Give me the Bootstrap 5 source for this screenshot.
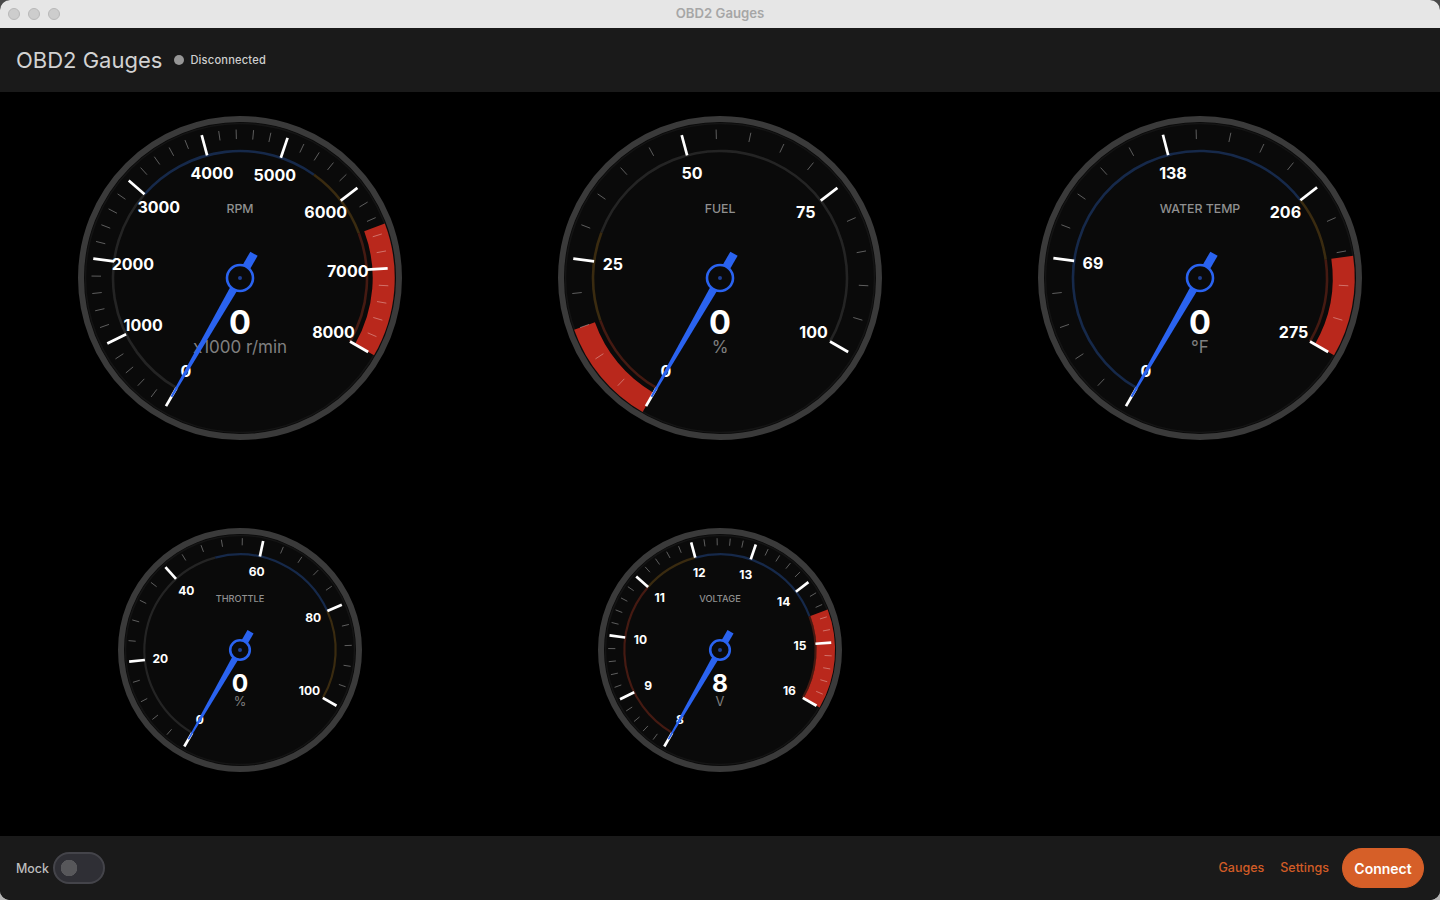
<!DOCTYPE html>
<html lang="en">
  <head>
    <meta charset="UTF-8" />
    <meta name="viewport" content="width=device-width, initial-scale=1.0" />
    <link rel="stylesheet" href="https://cdn.jsdelivr.net/npm/bootstrap@5.3.3/dist/css/bootstrap.min.css" />
    <title>OBD2 Gauges</title>
    <style>
      html, body { height: 100%; }
      body {
        background: linear-gradient(#4a4a4a 0 50%, #b5b5b5 50%);
        font-family: Inter, "Liberation Sans", sans-serif;
        overflow: hidden;
      }
      .app-window { height: 900px; border-radius: 10px; overflow: hidden; background: #000; }
      .title-bar { height: 28px; background: #e6e6e6; position: relative; }
      .light { width: 12px; height: 12px; border-radius: 50%; background: #cdcdcd; border: 1px solid #b8b8b8; }
      .title-text { font-size: 13.2px; font-weight: 600; color: #a6a6a6; line-height: 27px; }
      .traffic { gap: 8px; padding-left: 8px; }
      .app-header { height: 64px; background: #1a1a1a; padding: 0 16px; gap: 12px; }
      .app-title { font-size: 22px; font-weight: 400; color: #d2d2d2; margin: 0; line-height: 1; }
      .status-group { gap: 6px; }
      .status-dot { width: 10px; height: 10px; border-radius: 50%; background: #969696; }
      .status-text { font-size: 11.1px; font-weight: 500; color: #cfcfcf; letter-spacing: .2px; margin-top: 1px; }
      .gauge-area { height: 744px; display: grid; grid-template-columns: repeat(3, 480px); grid-template-rows: repeat(2, 372px); }
      .gauge-cell { display: flex; align-items: center; justify-content: center; }
      .gauge-cell svg { display: block; }
      .gauge-cell text { font-family: Inter, "Liberation Sans", sans-serif; text-anchor: middle; dominant-baseline: central; }
      .app-footer { height: 64px; background: #1a1a1a; padding: 0 16px; }
      .switch-group { gap: 4px; }
      .mock-label { font-size: 12.4px; font-weight: 500; color: #bdbdbd; margin-top: 2px; }
      .form-switch .mock-switch {
        width: 52px; height: 32px; margin: 0; float: none;
        background-color: #2f2f35; border: 2px solid #44444a;
        background-image: radial-gradient(circle at 14px 14px, #57575a 8px, transparent 8.5px);
        background-position: 0 0; background-size: auto;
      }
      .form-switch .mock-switch:focus { box-shadow: none; border-color: #44444a; }
      .foot-link { font-size: 12.5px; font-weight: 500; color: #d25c26; text-decoration: none; margin-top: 1px; }
      .btn-connect {
        --bs-btn-bg: #d65f28; --bs-btn-hover-bg: #d65f28; --bs-btn-color: #fff; --bs-btn-hover-color: #fff;
        --bs-btn-border-color: #d65f28; --bs-btn-hover-border-color: #d65f28;
        width: 82px; height: 40px; padding: 0; font-size: 14px; font-weight: 600; margin-left: -3px;
      }
    </style>
  </head>

  <body>
    <div class="app-window d-flex flex-column">
      <div class="title-bar d-flex align-items-center">
        <div class="traffic d-flex"><span class="light"></span><span class="light"></span><span class="light"></span></div>
        <div class="title-text position-absolute top-0 start-0 w-100 text-center">OBD2 Gauges</div>
      </div>

      <header class="app-header d-flex align-items-center">
        <h1 class="app-title">OBD2 Gauges</h1>
        <div class="status-group d-flex align-items-center">
          <span class="status-dot"></span>
          <span class="status-text">Disconnected</span>
        </div>
      </header>

      <main class="gauge-area" id="gauges"></main>

      <footer class="app-footer d-flex align-items-center justify-content-between">
        <div class="form-check form-switch switch-group d-flex align-items-center p-0 m-0">
          <label class="mock-label" for="mock">Mock</label>
          <input class="form-check-input mock-switch" type="checkbox" role="switch" id="mock" />
        </div>
        <nav class="d-flex align-items-center gap-3">
          <a class="foot-link" href="#">Gauges</a>
          <a class="foot-link" href="#">Settings</a>
          <button class="btn btn-connect rounded-pill">Connect</button>
        </nav>
      </footer>
    </div>

    <script>
      const START = 120;
      const SWEEP = 270;
      const BLUE = "#16294a";
      const AMBER = "#3a2b10";
      const DARKRED = "#451a12";
      const GREY = "#242424";
      const NEEDLE = "#2a63f0";

      const gauges = [
        { title: "RPM", unit: "x1000 r/min", value: "0", min: 0, max: 8000, labels: [0, 1000, 2000, 3000, 4000, 5000, 6000, 7000, 8000], subs: 40,
          arcs: [[0, 3000, GREY], [3000, 5500, BLUE], [5500, 6500, AMBER], [6500, 8000, DARKRED]], red: [6500, 8000] },
        { title: "FUEL", unit: "%", value: "0", min: 0, max: 100, labels: [0, 25, 50, 75, 100], subs: 20,
          arcs: [[0, 15, DARKRED], [15, 30, AMBER], [30, 100, GREY]], red: [0, 15] },
        { title: "WATER TEMP", unit: "°F", value: "0", min: 0, max: 275, labels: [0, 69, 138, 206, 275], subs: 20,
          arcs: [[0, 206, BLUE], [206, 236, AMBER], [236, 275, DARKRED]], red: [236, 275] },
        { title: "THROTTLE", unit: "%", value: "0", min: 0, max: 100, labels: [0, 20, 40, 60, 80, 100], subs: 25, small: true,
          arcs: [[0, 50, GREY], [50, 80, BLUE], [80, 100, AMBER]] },
        { title: "VOLTAGE", unit: "V", value: "8", min: 8, max: 16, labels: [8, 9, 10, 11, 12, 13, 14, 15, 16], subs: 40, small: true,
          arcs: [[8, 11, DARKRED], [11, 12, AMBER], [12, 14.5, BLUE], [14.5, 16, DARKRED]], red: [14.5, 16] },
      ];

      function pt(r, deg) {
        const a = (deg * Math.PI) / 180;
        return [+(r * Math.cos(a)).toFixed(2), +(r * Math.sin(a)).toFixed(2)];
      }

      function arc(r, a, b, color, width) {
        const large = b - a > 180 ? 1 : 0;
        const [x1, y1] = pt(r, a);
        const [x2, y2] = pt(r, b);
        return `<path d="M${x1} ${y1} A${r} ${r} 0 ${large} 1 ${x2} ${y2}" fill="none" stroke="${color}" stroke-width="${width}"/>`;
      }

      function tick(r1, r2, deg, attrs) {
        const [x1, y1] = pt(r1, deg);
        const [x2, y2] = pt(r2, deg);
        return `<line x1="${x1}" y1="${y1}" x2="${x2}" y2="${y2}" stroke="#fff" ${attrs}/>`;
      }

      function gaugeSvg(g) {
        const toDeg = (v) => START + ((v - g.min) / (g.max - g.min)) * SWEEP;
        const size = g.small ? 244 : 324;
        // strokes keep their pixel width on the small gauges
        const k = 324 / size;
        const ring = 6 * k;
        let s = `<svg width="${size}" height="${size}" viewBox="-162 -162 324 324">`;
        s += `<circle r="${162 - ring / 2}" fill="#0a0a0a" stroke="#3a3a3a" stroke-width="${ring}"/>`;
        s += `<circle r="${162 - ring - 1.5 * k}" fill="none" stroke="#141414" stroke-width="${1.5 * k}"/>`;
        g.arcs.forEach(([a, b, c]) => (s += arc(127, toDeg(a), toDeg(b), c, g.small ? 2.2 * k : 2.6)));
        if (g.red) {
          const bandR = g.small ? 140.5 : 143.7;
          const bandW = g.small ? 24.5 : 22;
          s += arc(bandR, toDeg(g.red[0]), toDeg(g.red[1]), "#b9281c", bandW);
        }

        const majorEvery = g.subs / (g.labels.length - 1);
        for (let i = 0; i <= g.subs; i++) {
          if (i % majorEvery === 0) continue;
          s += tick(139, 148.5, START + (i / g.subs) * SWEEP, `stroke-opacity=".34" stroke-width="${k}"`);
        }
        const labelR = g.small ? 106.5 : 108;
        const labelDy = g.small ? 0.4 : -0.3;
        g.labels.forEach((v) => {
          const d = toDeg(v);
          s += tick(127, 148, d, `stroke-width="${2.7 * k}"`);
          const [lx, ly] = pt(labelR, d);
          s += `<text x="${lx}" y="${ly + labelDy}" fill="#fff" font-size="16" font-weight="700">${v}</text>`;
        });

        s += `<text y="${g.small ? -68.4 : -69.6}" fill="#909090" font-size="12.3" font-weight="500">${g.title}</text>`;
        s += `<text y="${g.small ? 43.6 : 44.6}" fill="#fff" font-size="32.5" font-weight="700">${g.value}</text>`;
        s += `<text y="69" fill="#808080" font-size="17" font-weight="400">${g.unit}</text>`;

        // needle, resting at the gauge minimum
        const [tx, ty] = pt(137, START);
        const [bx, by] = pt(28, START + 180);
        const [sx, sy] = pt(1, START + 90);
        const half = g.small ? 4.6 : 4.2;
        const corners = [
          [tx + sx, ty + sy],
          [tx - sx, ty - sy],
          [-half * sx, -half * sy],
          [bx - half * sx, by - half * sy],
          [bx + half * sx, by + half * sy],
          [half * sx, half * sy],
        ];
        s += `<polygon points="${corners.map((c) => c.join(" ")).join(" ")}" fill="${NEEDLE}"/>`;
        s += `<circle r="13" fill="#0a0a0a" stroke="${NEEDLE}" stroke-width="${2.6 * k}"/>`;
        s += `<circle r="${2 * k}" fill="#1e3f94"/>`;
        return s + "</svg>";
      }

      document.querySelector("#gauges").innerHTML = gauges
        .map((g) => `<div class="gauge-cell">${gaugeSvg(g)}</div>`)
        .join("");
    </script>
    <script src="https://cdn.jsdelivr.net/npm/bootstrap@5.3.3/dist/js/bootstrap.bundle.min.js"></script>
  </body>
</html>
